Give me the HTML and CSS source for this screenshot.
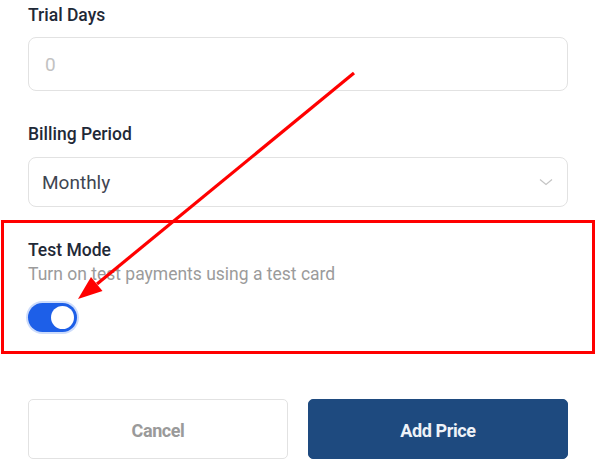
FILE: index.html
```html
<!DOCTYPE html>
<html lang="en">
<head>
<meta charset="utf-8">
<title>Add Price</title>
<link rel="stylesheet" href="styles.css">
</head>
<body>
<div class="page">
  <form class="form">
    <div class="field">
      <label class="label">Trial Days</label>
      <div class="input"><span class="placeholder">0</span></div>
    </div>
    <div class="field">
      <label class="label">Billing Period</label>
      <div class="select">
        <span class="value">Monthly</span>
        <svg class="chevron" width="14" height="8" viewBox="0 0 14 8"><path d="M1 1.5 L7 6.5 L13 1.5" fill="none" stroke="#c4c4c4" stroke-width="1.2"/></svg>
      </div>
    </div>
    <div class="field toggle-field">
      <div class="label">Test Mode</div>
      <div class="desc">Turn on test payments using a test card</div>
      <div class="toggle"><span class="knob"></span></div>
    </div>
    <div class="actions">
      <button type="button" class="btn btn-cancel">Cancel</button>
      <button type="button" class="btn btn-primary">Add Price</button>
    </div>
  </form>
  <div class="highlight"></div>
  <svg class="arrow" width="596" height="475" viewBox="0 0 596 475">
    <line x1="354" y1="73" x2="97" y2="284" stroke="#ff0000" stroke-width="3.2"/>
    <polygon points="78,299 102.5,291 91,277" fill="#ff0000"/>
  </svg>
</div>
</body>
</html>
```

FILE: styles.css
```css
* { box-sizing: border-box; }
html, body { margin: 0; padding: 0; background: #ffffff; }
body {
  font-family: Roboto, "Liberation Sans", Arial, sans-serif;
  width: 596px;
  height: 475px;
  overflow: hidden;
}
.page { position: relative; width: 596px; height: 475px; }
.form {
  width: 540px;
  margin-left: 28px;
  padding-top: 5px;
  display: flex;
  flex-direction: column;
}
.field { display: flex; flex-direction: column; }
.field + .field { margin-top: 33px; }
.label {
  font-size: 17.5px;
  font-weight: 500;
  line-height: 20px;
  color: #1f2937;
}
.input {
  margin-top: 12px;
  height: 54px;
  border: 1px solid #e2e2e2;
  border-radius: 8px;
  display: flex;
  align-items: center;
  padding-left: 16px;
  font-size: 19px;
}
.placeholder { color: #c2c2c2; }
.select {
  margin-top: 13px;
  height: 50px;
  border: 1px solid #e2e2e2;
  border-radius: 8px;
  display: flex;
  align-items: center;
  justify-content: space-between;
  padding-left: 13px;
  padding-right: 14px;
  font-size: 19px;
  color: #3f4652;
}
.chevron { display: block; }
.toggle-field { margin-top: 34px; }
.desc {
  margin-top: 4px;
  font-size: 17.5px;
  line-height: 20px;
  color: #9b9b9b;
}
.toggle {
  margin-top: 19px;
  width: 49px;
  height: 29px;
  border-radius: 15px;
  background: #1d5fe8;
  box-shadow: 0 0 0 2px #cddcfb;
  display: flex;
  align-items: center;
  justify-content: flex-end;
  padding-right: 3px;
}
.knob {
  width: 23px;
  height: 23px;
  border-radius: 50%;
  background: #ffffff;
}
.actions {
  margin-top: 67px;
  display: flex;
  gap: 20px;
}
.btn {
  flex: 1;
  height: 60px;
  padding-top: 3px;
  border-radius: 5px;
  font-family: Roboto, "Liberation Sans", Arial, sans-serif;
  font-size: 18px;
  font-weight: 700;
  letter-spacing: -0.4px;
  cursor: pointer;
}
.btn-cancel {
  background: #ffffff;
  border: 1px solid #e2e2e2;
  color: #9a9a9a;
}
.btn-primary {
  background: #1e4a7f;
  border: 1px solid #1e4a7f;
  color: #eef2f8;
}
.highlight {
  position: absolute;
  left: 1px;
  top: 220px;
  width: 594px;
  height: 134px;
  border: 3px solid #ff0000;
  pointer-events: none;
}
.arrow {
  position: absolute;
  left: 0;
  top: 0;
  pointer-events: none;
}
```
